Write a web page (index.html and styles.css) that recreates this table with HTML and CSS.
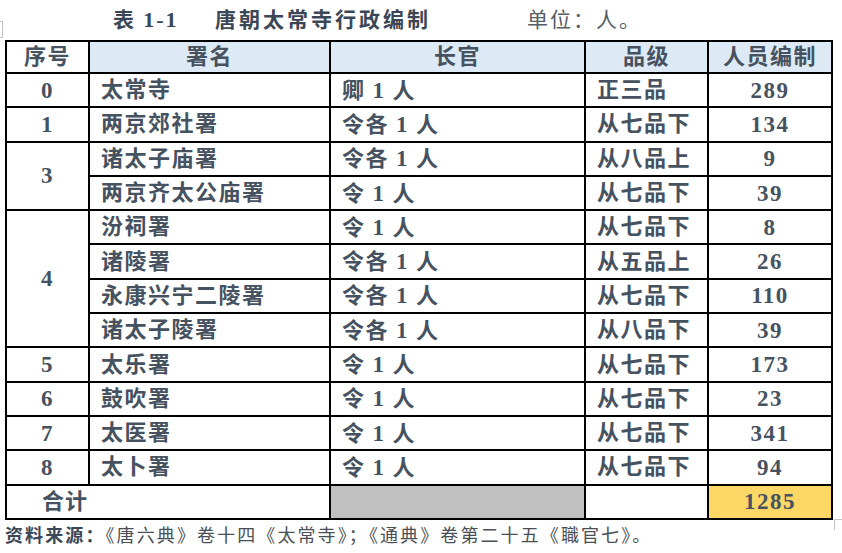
FILE: index.html
```html
<!DOCTYPE html>
<html lang="zh">
<head>
<meta charset="utf-8">
<link rel="stylesheet" href="styles.css">
</head>
<body>
<div class="page">
  <div class="mark-tl"></div>
  <div class="title"><span class="t-main">表 <span class="d">1-1</span></span><span class="t-name">唐朝太常寺行政编制</span><span class="t-unit">单位：人。</span></div>
  <table class="grid">
    <colgroup>
      <col class="c1"><col class="c2"><col class="c3"><col class="c4"><col class="c5">
    </colgroup>
    <tr class="head">
      <th class="plain">序号</th><th>署名</th><th>长官</th><th>品级</th><th>人员编制</th>
    </tr>
    <tr><td class="no">0</td><td class="tx">太常寺</td><td class="tx">卿 <span class="n">1</span> 人</td><td class="tx">正三品</td><td class="num">289</td></tr>
    <tr><td class="no">1</td><td class="tx">两京郊社署</td><td class="tx">令各 <span class="n">1</span> 人</td><td class="tx">从七品下</td><td class="num">134</td></tr>
    <tr><td class="no" rowspan="2">3</td><td class="tx">诸太子庙署</td><td class="tx">令各 <span class="n">1</span> 人</td><td class="tx">从八品上</td><td class="num">9</td></tr>
    <tr class="sub"><td class="tx">两京齐太公庙署</td><td class="tx">令 <span class="n">1</span> 人</td><td class="tx">从七品下</td><td class="num">39</td></tr>
    <tr><td class="no" rowspan="4">4</td><td class="tx">汾祠署</td><td class="tx">令 <span class="n">1</span> 人</td><td class="tx">从七品下</td><td class="num">8</td></tr>
    <tr class="sub"><td class="tx">诸陵署</td><td class="tx">令各 <span class="n">1</span> 人</td><td class="tx">从五品上</td><td class="num">26</td></tr>
    <tr class="sub"><td class="tx">永康兴宁二陵署</td><td class="tx">令各 <span class="n">1</span> 人</td><td class="tx">从七品下</td><td class="num">110</td></tr>
    <tr class="sub"><td class="tx">诸太子陵署</td><td class="tx">令各 <span class="n">1</span> 人</td><td class="tx">从八品下</td><td class="num">39</td></tr>
    <tr><td class="no">5</td><td class="tx">太乐署</td><td class="tx">令 <span class="n">1</span> 人</td><td class="tx">从七品下</td><td class="num">173</td></tr>
    <tr><td class="no">6</td><td class="tx">鼓吹署</td><td class="tx">令 <span class="n">1</span> 人</td><td class="tx">从七品下</td><td class="num">23</td></tr>
    <tr><td class="no">7</td><td class="tx">太医署</td><td class="tx">令 <span class="n">1</span> 人</td><td class="tx">从七品下</td><td class="num">341</td></tr>
    <tr><td class="no">8</td><td class="tx">太卜署</td><td class="tx">令 <span class="n">1</span> 人</td><td class="tx">从七品下</td><td class="num">94</td></tr>
    <tr class="total"><td class="sum" colspan="2">合计</td><td class="grey"></td><td></td><td class="num yellow">1285</td></tr>
  </table>
  <div class="mark-br"></div>
  <div class="foot"><span class="f-b">资料来源：</span>《唐六典》卷十四《太常寺》；《通典》卷第二十五《職官七》。</div>
</div>
</body>
</html>
```

FILE: styles.css
```css
html, body {
  margin: 0;
  padding: 0;
  background: #ffffff;
}
.page {
  position: relative;
  width: 842px;
  height: 553px;
  font-family: "Liberation Serif", "Noto Sans CJK SC", serif;
  color: #46525f;
}
.title {
  height: 40px;
  padding-left: 113px;
  display: flex;
  align-items: center;
  font-size: 21px;
  font-weight: bold;
  letter-spacing: 2px;
  box-sizing: border-box;
  padding-bottom: 4px;
  color: #3b4757;
}
.title .d {
  font-weight: bold;
  font-size: 22px;
}
.t-main {
  width: 102px;
}
.t-name {
  width: 312px;
  letter-spacing: 3px;
}
.t-unit {
  font-weight: normal;
  font-size: 21px;
  letter-spacing: 2px;
  color: #555d66;
}
.grid {
  margin-left: 5px;
  width: 826px;
  border-collapse: collapse;
  table-layout: fixed;
  font-size: 22px;
  font-weight: bold;
  letter-spacing: 1.5px;
}
.c1 { width: 83px; }
.c2 { width: 241px; }
.c3 { width: 255px; }
.c4 { width: 123px; }
.c5 { width: 124px; }
.grid th, .grid td {
  border: 2px solid #000;
  padding: 0;
  line-height: 1;
}
.grid tr {
  height: 34.3px;
}
.grid tr.head {
  height: 32px;
}
.head th {
  background: #dde9f5;
  text-align: center;
  font-weight: bold;
}
.head th.plain {
  background: #ffffff;
}
.no, .num {
  text-align: center;
  font-weight: bold;
  font-size: 23px;
}
.n {
  font-weight: bold;
  font-size: 23px;
}
.tx {
  text-align: left;
  padding-left: 11px !important;
}
.sum {
  text-align: left;
  padding-left: 35px !important;
  letter-spacing: 1px;
}
.grey {
  background: #c0c0c0;
}
.yellow {
  background: #fdd766;
}
.mark-tl {
  position: absolute;
  left: 0;
  top: 21px;
  width: 2px;
  height: 15px;
  border-top: 1px solid #c4c4c4;
  border-bottom: 1px solid #c4c4c4;
  border-right: 1px solid #c4c4c4;
}
.mark-br {
  position: absolute;
  left: 834px;
  top: 519px;
  width: 8px;
  height: 10px;
  border-top: 1px solid #c4c4c4;
  border-left: 1px solid #c4c4c4;
}
.foot {
  padding-left: 5px;
  margin-top: 5px;
  font-size: 18px;
  letter-spacing: 2.1px;
  color: #4a4f56;
  line-height: 22px;
}
.f-b {
  font-weight: bold;
  color: #3b4757;
}
```
